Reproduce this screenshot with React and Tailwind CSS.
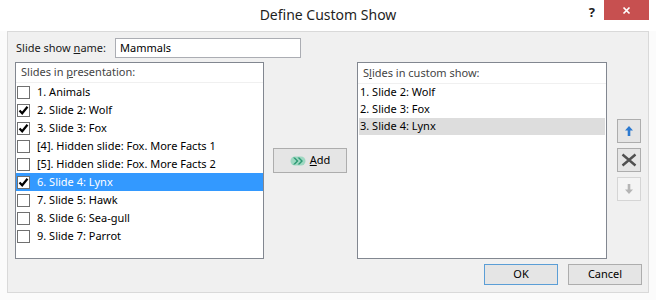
import React from 'react';

const leftItems = [
  { label: '1. Animals', checked: false },
  { label: '2. Slide 2: Wolf', checked: true },
  { label: '3. Slide 3: Fox', checked: true },
  { label: '[4]. Hidden slide: Fox. More Facts 1', checked: false },
  { label: '[5]. Hidden slide: Fox. More Facts 2', checked: false },
  { label: '6. Slide 4: Lynx', checked: true, selected: true },
  { label: '7. Slide 5: Hawk', checked: false },
  { label: '8. Slide 6: Sea-gull', checked: false },
  { label: '9. Slide 7: Parrot', checked: false },
];

const rightItems = ['1. Slide 2: Wolf', '2. Slide 3: Fox', '3. Slide 4: Lynx'];

function CheckBox({ checked }) {
  return (
    <div className="w-[13px] h-[13px] border border-[#707070] bg-white flex items-center justify-center shrink-0">
      {checked && (
        <svg width="11" height="11" viewBox="0 0 11 11">
          <path d="M1.5 5.5 L4.2 8.3 L9.5 1.8" fill="none" stroke="#000" strokeWidth="2.2" />
        </svg>
      )}
    </div>
  );
}

function AddIcon() {
  return (
    <svg width="16" height="10" viewBox="0 0 16 10">
      <rect x="0.5" y="0.5" width="15" height="9" rx="4.5" fill="#9fd8c2" />
      <path d="M3 1.5 L6.5 5 L3 8.5 L5 8.5 L8.5 5 L5 1.5 Z" fill="#2e9a74" />
      <path d="M7.5 1.5 L11 5 L7.5 8.5 L9.5 8.5 L13 5 L9.5 1.5 Z" fill="#2e9a74" />
    </svg>
  );
}

export default function App() {
  return (
    <div
      className="w-[656px] h-[300px] bg-[#fbfbfb] flex flex-col overflow-hidden text-[11px] text-black"
      style={{ fontFamily: '"Segoe UI", "Noto Sans", sans-serif' }}
    >
      {/* title bar */}
      <div className="h-[31px] bg-white grid grid-cols-[1fr_auto_1fr] shrink-0">
        <div />
        <div className="text-[14px] text-[#1e1e1e] leading-none pt-[8px]">Define Custom Show</div>
        <div className="flex justify-end items-start pr-[7px]">
          <span className="text-[13px] font-bold text-[#222] mt-[3px] mr-[9px]">?</span>
          <div className="w-[45px] h-[20px] bg-[#c75050] flex items-center justify-center">
            <svg width="9" height="9" viewBox="0 0 9 9">
              <path d="M1.5 1.5 L7.5 7.5 M7.5 1.5 L1.5 7.5" stroke="#fff" strokeWidth="1.7" />
            </svg>
          </div>
        </div>
      </div>

      {/* client area */}
      <div className="mx-[7px] h-[262px] border border-[#d9d9d9] bg-[#f0f0f0] flex flex-col">
        <div className="flex items-center pt-[6px]">
          <label className="ml-[8px] w-[99px] text-[#1a1a1a]">
            Slide show <u>n</u>ame:
          </label>
          <div className="w-[186px] h-[20px] border border-[#abadb3] bg-white flex items-center pl-[4px]">
            Mammals
          </div>
        </div>

        <div className="flex mt-[4px] pl-[7px]">
          {/* left list */}
          <div className="w-[249px] h-[197px] border border-[#828790] bg-white flex flex-col">
            <div className="h-[20px] border-b border-[#f0f0f0] flex items-center pl-[5px] text-[#444]">
              <span>Slides in <u>p</u>resentation:</span>
            </div>
            {leftItems.map((item) => (
              <div
                key={item.label}
                className={
                  'h-[18px] flex items-center pl-[1px] gap-[7px] ' +
                  (item.selected ? 'bg-[#3399ff] text-white' : '')
                }
              >
                <CheckBox checked={item.checked} />
                <span>{item.label}</span>
              </div>
            ))}
          </div>

          {/* add */}
          <div className="w-[93px] flex items-center justify-center">
            <button className="w-[74px] h-[25px] border border-[#adadad] bg-[#e5e5e5] flex items-center justify-center gap-[4px] -ml-[1px]">
              <AddIcon />
              <span><u>A</u>dd</span>
            </button>
          </div>

          {/* right list */}
          <div className="w-[250px] h-[197px] border border-[#828790] bg-white flex flex-col">
            <div className="h-[21px] border-b border-[#f0f0f0] flex items-center pl-[5px] text-[#444]">
              <span>S<u>l</u>ides in custom show:</span>
            </div>
            {rightItems.map((item, i) => (
              <div
                key={item}
                className={'h-[17px] flex items-center pl-[1px] mx-[1px] ' + (i === 2 ? 'bg-[#dddddd]' : '')}
              >
                {item}
              </div>
            ))}
          </div>

          {/* arrows */}
          <div className="flex flex-col gap-[5px] pt-[57px] ml-[10px]">
            <div className="w-[24px] h-[24px] border border-[#adadad] bg-[#e5e5e5] flex items-center justify-center">
              <svg width="10" height="12" viewBox="0 0 10 12">
                <path d="M5 1 L9 5.5 L6.3 5.5 L6.3 11 L3.7 11 L3.7 5.5 L1 5.5 Z" fill="#2b79d0" />
              </svg>
            </div>
            <div className="w-[24px] h-[24px] border border-[#adadad] bg-[#e5e5e5] flex items-center justify-center">
              <svg width="16" height="14" viewBox="0 0 16 14">
                <path d="M1.5 1.5 L14.5 12.5 M14.5 1.5 L1.5 12.5" stroke="#505050" strokeWidth="2.4" />
              </svg>
            </div>
            <div className="w-[24px] h-[24px] border border-[#d5d5d5] bg-[#f4f4f4] flex items-center justify-center">
              <svg width="10" height="12" viewBox="0 0 10 12">
                <path d="M5 11 L9 6.5 L6.3 6.5 L6.3 1 L3.7 1 L3.7 6.5 L1 6.5 Z" fill="#b5b5b5" />
              </svg>
            </div>
          </div>
        </div>

        <div className="flex justify-end gap-[10px] mt-[5px] pr-[6px]">
          <button className="w-[74px] h-[21px] border border-[#5b9ed6] bg-[#e5e5e5] flex items-center justify-center">
            OK
          </button>
          <button className="w-[74px] h-[21px] border border-[#adadad] bg-[#e5e5e5] flex items-center justify-center">
            Cancel
          </button>
        </div>
      </div>
    </div>
  );
}
